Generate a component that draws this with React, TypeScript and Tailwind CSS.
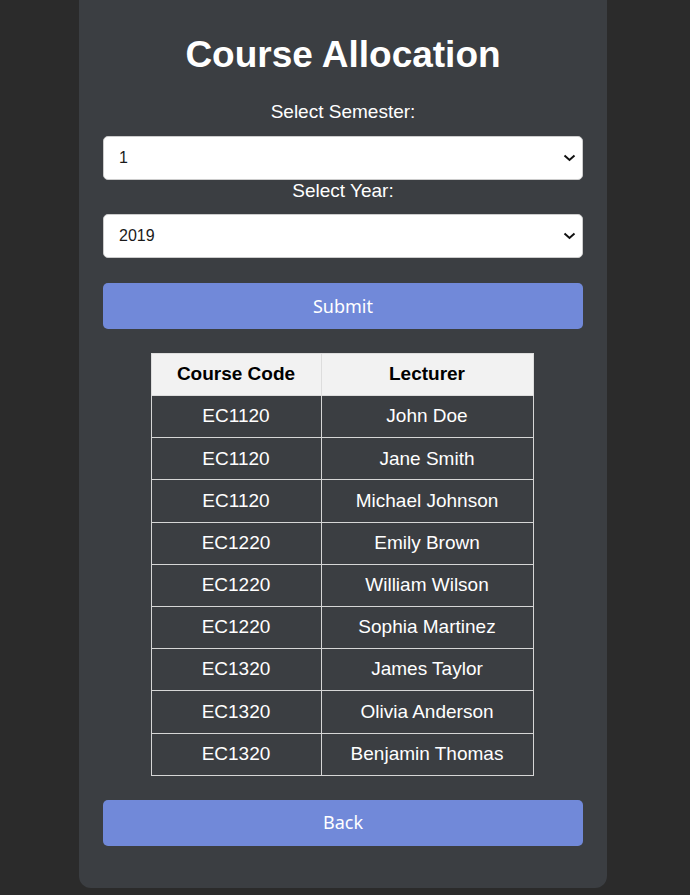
const rows = [
  { code: "EC1120", name: "John Doe" },
  { code: "EC1120", name: "Jane Smith" },
  { code: "EC1120", name: "Michael Johnson" },
  { code: "EC1220", name: "Emily Brown" },
  { code: "EC1220", name: "William Wilson" },
  { code: "EC1220", name: "Sophia Martinez" },
  { code: "EC1320", name: "James Taylor" },
  { code: "EC1320", name: "Olivia Anderson" },
  { code: "EC1320", name: "Benjamin Thomas" },
];

function Chevron() {
  return (
    <svg className="absolute right-[7px] top-1/2 -translate-y-1/2 pointer-events-none" width="13" height="8" viewBox="0 0 13 8" fill="none">
      <path d="M1.5 1.5 L6.5 6 L11.5 1.5" stroke="#111" strokeWidth="2" />
    </svg>
  );
}

function Select({ value, options }: { value: string; options: string[] }) {
  return (
    <div className="relative">
      <select defaultValue={value} className="appearance-none h-[44px] w-full bg-white text-[#1a1a1a] rounded-[5px] border border-[#cccccc] pl-[15px] text-[16px] outline-none">
        {options.map((o) => (
          <option key={o} value={o}>{o}</option>
        ))}
      </select>
      <Chevron />
    </div>
  );
}

export default function App() {
  return (
    <div className="min-h-[895px] bg-[#2b2b2b] flex justify-center pr-[4px]" style={{ fontFamily: "'Liberation Sans', Arial, sans-serif" }}>
      <div className="w-[528px] h-[888px] bg-[#3b3e42] rounded-b-[12px] px-6 pt-[34px] text-white">
        <h1 className="text-[37px] font-bold text-center leading-[42px]">Course Allocation</h1>

        <div className="mt-[25px] flex flex-col">
          <label className="text-[19px] text-center leading-[22px] mb-[13px]">Select Semester:</label>
          <Select value="1" options={["1", "2"]} />
          <label className="text-[19px] text-center leading-[22px] mb-[12px]">Select Year:</label>
          <Select value="2019" options={["2019", "2020", "2021"]} />
        </div>

        <button className="mt-[25px] w-full h-[46px] rounded-[5px] bg-[#7189d9] text-white text-[18px]" style={{ fontFamily: "'Noto Sans', sans-serif" }}>
          Submit
        </button>

        <div className="mt-[24px] flex justify-center pr-[2px]">
          <table className="w-[383px] border-collapse text-[19px]">
            <thead>
              <tr className="bg-[#f2f2f2] text-black h-[42px]">
                <th className="w-[170px] border border-[#dddddd] font-bold">Course Code</th>
                <th className="border border-[#dddddd] font-bold">Lecturer</th>
              </tr>
            </thead>
            <tbody>
              {rows.map((r, i) => (
                <tr key={i} className="h-[42.2px]">
                  <td className="border border-[#d6d6d6] text-center">{r.code}</td>
                  <td className="border border-[#d6d6d6] text-center">{r.name}</td>
                </tr>
              ))}
            </tbody>
          </table>
        </div>

        <button className="mt-[24px] w-full h-[46px] rounded-[5px] bg-[#7189d9] text-white text-[18px]" style={{ fontFamily: "'Noto Sans', sans-serif" }}>
          Back
        </button>
      </div>
    </div>
  );
}
